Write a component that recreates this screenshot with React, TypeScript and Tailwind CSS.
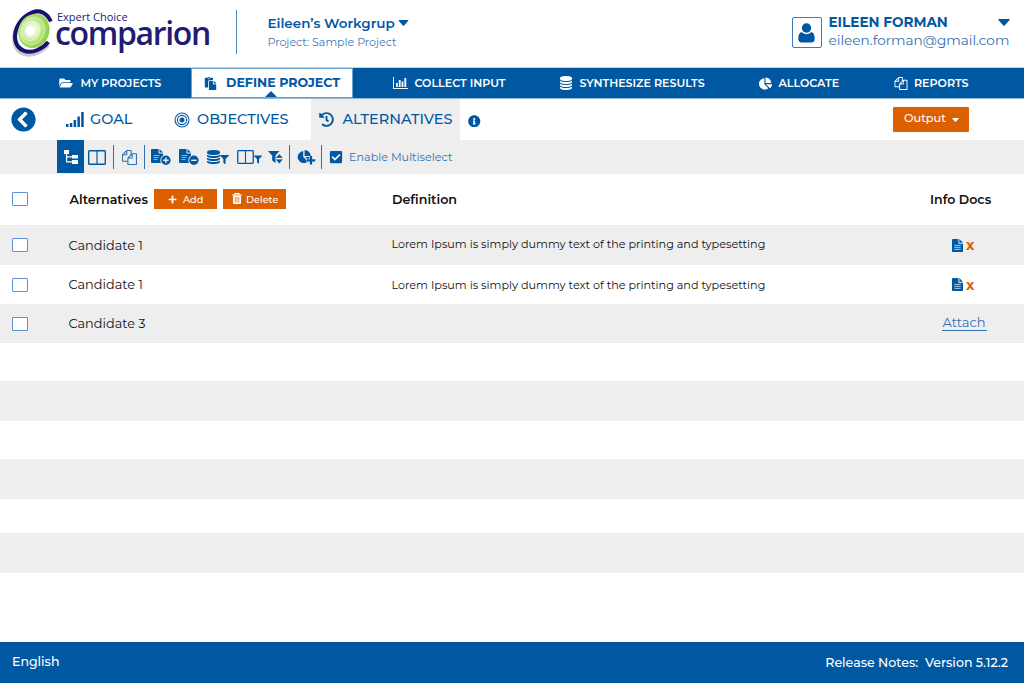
import type { ReactNode } from 'react';
import {
  FaChartPie,
  FaCheckSquare,
  FaChevronCircleLeft,
  FaFilter,
  FaFolderOpen,
  FaHistory,
  FaInfoCircle,
  FaPaste,
  FaPlus,
} from 'react-icons/fa';

type IconProps = { className?: string };

function Logo() {
  return (
    <svg className="h-[50px] w-[44px] shrink-0" viewBox="0 0 44 50">
      <defs>
        <radialGradient id="lime" cx="0.42" cy="0.5" r="0.58">
          <stop offset="0" stopColor="#ffffff" />
          <stop offset="0.3" stopColor="#e9f7d3" />
          <stop offset="0.65" stopColor="#b3e277" />
          <stop offset="1" stopColor="#86cc3c" />
        </radialGradient>
      </defs>
      <path d="M38 13C34 6 27 4 20 7C9 11 1.500 24 3.500 35.500C6 47.500 17 50 26.500 46C31 44 34 41.500 37 38" fill="none" stroke="#c9c9cd" strokeWidth="4" />
      <path d="M39.800 14.500C36 5.500 28.500 2.500 21 5.500C10 10 2.500 22 4.300 33C6.500 44 17 47 26.500 43C31 41 34.500 38.500 37.300 35" fill="none" stroke="#17126e" strokeWidth="4" />
      <ellipse cx="22.800" cy="24" rx="15.300" ry="17.400" transform="rotate(25 22.800 24)" fill="url(#lime)" />
      <g fill="none" stroke="#ffffff" strokeOpacity="0.5" strokeWidth="0.9">
        <ellipse cx="21.500" cy="24" rx="11.500" ry="13.600" transform="rotate(25 21.500 24)" />
        <ellipse cx="20" cy="24" rx="8.300" ry="10" transform="rotate(25 20 24)" />
      </g>
      <ellipse cx="18.500" cy="24" rx="4.300" ry="5" fill="#ffffff" />
    </svg>
  );
}

function Caret({ className }: IconProps) {
  return (
    <svg className={className} viewBox="0 0 12 7">
      <path d="M1 0h10q1.200 0.300 0.400 1.300L6.700 6.500q-0.700 0.600-1.400 0L0.600 1.300Q-0.200 0.300 1 0z" fill="currentColor" />
    </svg>
  );
}

function Person({ className }: IconProps) {
  return (
    <svg className={className} viewBox="0 0 18 21">
      <path d="M3.500 9.500C1.200 10.500 0.300 13.500 0.300 16.500c0 2.600 1.300 4 3.500 4h10.400c2.200 0 3.500-1.400 3.500-4c0-3-0.900-6-3.200-7a7.800 7.800 0 0 1-11 0z" fill="currentColor" />
      <circle cx="9" cy="5.200" r="5" fill="currentColor" />
    </svg>
  );
}

function BarChart({ className }: IconProps) {
  return (
    <svg className={className} viewBox="0 0 15 12">
      <path d="M0 0h1v11h14v1H0zM3 6h1.800v4H3zM5.800 3h1.800v7H5.800zM8.600 4.500h1.800V10H8.600zM11.400 1h1.800v9h-1.800z" fill="currentColor" />
    </svg>
  );
}

function Database({ className }: IconProps) {
  return (
    <svg className={className} viewBox="0 0 1536 1792" preserveAspectRatio="none">
      <path
        d="M768 768q237 0 443-43t325-127v170q0 69-103 128t-280 93.500-385 34.500-385-34.500T103 896 0 768V598q119 84 325 127t443 43zm0 768q237 0 443-43t325-127v170q0 69-103 128t-280 93.500-385 34.500-385-34.500-280-93.500-103-128v-170q119 84 325 127t443 43zm0-384q237 0 443-43t325-127v170q0 69-103 128t-280 93.500-385 34.500-385-34.500-280-93.500T0 1152V982q119 84 325 127t443 43zM768 0q208 0 385 34.500T1433 128t103 128v128q0 69-103 128t-280 93.500T768 640t-385-34.500T103 512 0 384V256q0-69 103-128t280-93.500T768 0z"
        fill="currentColor"
      />
    </svg>
  );
}

function Copies({ className }: IconProps) {
  return (
    <svg className={className} viewBox="0 0 1792 1792">
      <path
        d="M1696 384q40 0 68 28t28 68v1216q0 40-28 68t-68 28H736q-40 0-68-28t-28-68v-288H96q-40 0-68-28t-28-68V640q0-40 20-88t48-76L476 68q28-28 76-48t88-20h416q40 0 68 28t28 68v328q68-40 128-40h416zm-544 213L853 896h299V597zM512 213L213 512h299V213zm196 647l316-316V128H640v416q0 40-28 68t-68 28H128v640h512v-256q0-40 20-88t48-76zm956 804V512h-384v416q0 40-28 68t-68 28H768v640h896z"
        fill="currentColor"
      />
    </svg>
  );
}

function Signal({ className }: IconProps) {
  return (
    <svg className={className} viewBox="0 0 18 15">
      <path d="M0 12h2.500v3H0zM3.800 11h2.500v4H3.800zM7.600 8h2.500v7H7.600zM11.400 4.500h2.500V15h-2.500zM15.200 0h2.500v15h-2.500z" fill="currentColor" />
    </svg>
  );
}

function Target({ className }: IconProps) {
  return (
    <svg className={className} viewBox="0 0 16 16" fill="none" stroke="currentColor">
      <circle cx="8" cy="8" r="7" strokeWidth="1.100" />
      <circle cx="8" cy="8" r="4.600" strokeWidth="1.100" />
      <circle cx="8" cy="8" r="2.300" fill="currentColor" strokeWidth="0.500" />
    </svg>
  );
}

function Tree({ className }: IconProps) {
  return (
    <svg className={className} viewBox="0 0 14 14">
      <path d="M0 0h5v4H3.200v2.200H8V5h6v3.500H8V7.400H3.200v3.900H8V10h6v4H8v-1.400H1.900V4H0z" fill="currentColor" />
    </svg>
  );
}

function Columns({ className }: IconProps) {
  return (
    <svg className={className} viewBox="0 0 18 15" fill="none" stroke="currentColor">
      <rect x="0.700" y="0.700" width="16.600" height="13.600" rx="0.800" strokeWidth="1.400" />
      <path d="M9 1v13" strokeWidth="1.200" />
    </svg>
  );
}

function Doc({ className }: IconProps) {
  return (
    <svg className={className} viewBox="0 0 12 14">
      <path d="M1 0h6v4.200q0 0.800 0.800 0.800H12v8.200q0 0.800-0.800 0.800H0.800Q0 14 0 13.200V0.800Q0 0 1 0zM8 0l4 4H8z" fill="currentColor" />
      <path d="M2.500 6.800h7M2.500 9h7M2.500 11.200h7" stroke="#eeeeee" strokeWidth="0.800" />
    </svg>
  );
}

function DocBadge({ plus }: { plus: boolean }) {
  return (
    <svg className="h-4 w-5 shrink-0" viewBox="0 0 20 16">
      <path d="M1 0h6.500v3.700q0 0.800 0.800 0.800H12V14H1.200Q0 14 0 13V1Q0 0 1 0zM8.500 0l3.500 3.500H8.500z" fill="currentColor" />
      <path d="M2.500 6.500h6M2.500 8.500h5M2.500 10.500h4" stroke="#eeeeee" strokeWidth="0.600" />
      <circle cx="14.500" cy="11.300" r="5.200" fill="#eeeeee" />
      <circle cx="14.900" cy="11.300" r="4.700" fill="currentColor" />
      <path d={plus ? 'M12.200 11.300h5.400M14.900 8.600v5.400' : 'M12.200 11.300h5.400'} stroke="#eeeeee" strokeWidth="1.400" />
    </svg>
  );
}

function FilterSort({ className }: IconProps) {
  return (
    <svg className={className} viewBox="0 0 15 13">
      <path d="M0 0h11.500L7.500 4.500V12L4.200 9.500V4.800z" fill="currentColor" />
      <path d="M7.500 7L11.300 3L15 7zM7.500 8.300h7.500L11.300 12.700z" fill="currentColor" stroke="#eeeeee" strokeWidth="0.300" />
    </svg>
  );
}

function PiePlus({ className }: IconProps) {
  return (
    <svg className={className} viewBox="0 0 20 16">
      <path d="M6.500 1v6.500l5 4.800A6.500 6.500 0 1 1 6.500 1z" fill="currentColor" />
      <path d="M8 0a6.500 6.500 0 0 1 6.500 6.500H8zM8.500 7.500h5.500l-2 3z" fill="currentColor" />
      <path d="M10 11h9.500M14.700 6.300v9.500" stroke="#eeeeee" strokeWidth="3.200" />
      <path d="M10.300 11h9M14.800 6.500v9" stroke="currentColor" strokeWidth="2.400" />
    </svg>
  );
}

function Trash({ className }: IconProps) {
  return (
    <svg className={className} viewBox="0 0 10 11">
      <path d="M3 1.500V0.500h4v1M0 2h10" fill="none" stroke="currentColor" strokeWidth="1.200" />
      <path d="M1 2.600h8V10q0 1-1 1H2q-1 0-1-1z" fill="currentColor" />
      <path d="M3.200 4v5.500M5 4v5.500M6.800 4v5.500" stroke="#dc6000" strokeWidth="0.700" />
    </svg>
  );
}

function NavItem({ left, icon, gap, children }: { left: string; icon: ReactNode; gap: string; children: ReactNode }) {
  return (
    <div className={`flex shrink-0 items-center whitespace-nowrap text-[11.100px] font-semibold text-white ${left} ${gap}`}>
      {icon}
      <span>{children}</span>
    </div>
  );
}

function Checkbox() {
  return <span className="block h-[14px] w-4 rounded-[1px] border border-[#5b90d4] bg-white" />;
}

const LOREM = 'Lorem Ipsum is simply dummy text of the printing and typesetting';

type RowProps = { name: string; height: string; shade: string; attached: boolean; nameShift?: string; textShift?: string };

function Row({ name, height, shade, attached, nameShift = '', textShift = '' }: RowProps) {
  return (
    <div className={`flex items-center ${height} ${shade}`}>
      <div className="w-[68.500px] pl-3">
        <Checkbox />
      </div>
      <div className={`w-[323px] text-[12.850px] font-[450] text-[#111111] ${nameShift}`}>{name}</div>
      <div className={`w-[550px] text-[11.200px] font-[450] text-[#111111] ${textShift}`}>{attached ? LOREM : ''}</div>
      {attached ? (
        <div className="flex items-center gap-[3px] pl-[10.500px] text-[#0058a3]">
          <Doc className="h-[13px] w-[11px]" />
          <span className="text-[14px] leading-4 font-bold text-[#dc6000]">x</span>
        </div>
      ) : (
        <a className="-mt-0.5 border-b border-[#2f70b2] px-px text-[13px] leading-[15px] font-[450] text-[#2f70b2]">Attach</a>
      )}
    </div>
  );
}

export default function App() {
  return (
    <div className="flex h-[683px] w-[1024px] flex-col overflow-hidden bg-white font-['Montserrat','Inter',sans-serif] text-[#0058a3]">
      <header className="flex h-[68px] shrink-0 border-b border-[#bcd3e4]">
        <div className="flex w-[236px] pt-[7px] pl-[11px]">
          <Logo />
          <div className="flex flex-col whitespace-nowrap text-[#211c72] font-['Open_Sans',sans-serif]">
            <span className="mt-[3px] ml-[2px] h-[12px] text-[11px] leading-[14px] font-medium">Expert Choice</span>
            <span className="text-[32px] leading-[22px] font-semibold tracking-[-1.350px]">comparion</span>
          </div>
        </div>
        <div className="mt-[10px] h-11 w-px bg-[#4d8cc3]" />
        <div className="w-[554.500px] pt-[14px] pl-[30.500px]">
          <div className="flex items-center gap-[3px] text-[13.500px] leading-[18px] font-semibold">
            <span>Eileen’s Workgrup</span>
            <Caret className="h-[6px] w-[11px]" />
          </div>
          <div className="mt-px text-[11.050px] leading-[18px] text-[#3e79b8]">Project: Sample Project</div>
        </div>
        <div className="mt-[17px] flex h-[31px] w-[30px] items-center justify-center rounded-[2px] border border-[#3a7dbb]">
          <Person className="h-[20px] w-[17px]" />
        </div>
        <div className="w-[182px] pt-[14px] pl-[7px]">
          <div className="flex items-center justify-between text-[13.600px] leading-[17px] font-bold">
            <span>EILEEN FORMAN</span>
            <Caret className="mr-[-6px] h-[7px] w-3" />
          </div>
          <div className="text-[13.650px] leading-[18px] text-[#2f70b2]">eileen.forman@gmail.com</div>
        </div>
      </header>

      <nav className="flex h-[30px] shrink-0 bg-[#0058a3]">
        <NavItem left="w-[191px] pl-[59px]" gap="gap-[7.500px]" icon={<FaFolderOpen className="h-3 w-[14px]" />}>
          MY PROJECTS
        </NavItem>
        <div className="relative flex w-[162px] items-center gap-[9px] border border-[#6ba3cf] bg-white pl-[12px] text-[12.600px] font-bold whitespace-nowrap">
          <FaPaste className="h-[13px] w-[13px]" />
          <span>DEFINE PROJECT</span>
          <svg className="absolute bottom-0 left-[73px] h-[6px] w-3" viewBox="0 0 12 6">
            <path d="M6 0L12 6H0z" fill="#0058a3" />
          </svg>
        </div>
        <NavItem left="w-[207px] pl-[40px]" gap="gap-[6.500px]" icon={<BarChart className="h-[12px] w-[15px]" />}>
          COLLECT INPUT
        </NavItem>
        <NavItem left="w-[199px]" gap="gap-[7.500px]" icon={<Database className="h-[14px] w-3" />}>
          SYNTHESIZE RESULTS
        </NavItem>
        <NavItem left="w-[134.500px]" gap="gap-[6.500px]" icon={<FaChartPie className="h-[13px] w-[13px]" />}>
          ALLOCATE
        </NavItem>
        <NavItem left="" gap="gap-[6.500px]" icon={<Copies className="h-[13px] w-[14px]" />}>
          REPORTS
        </NavItem>
      </nav>

      <div className="flex h-[42px] shrink-0 border-t border-[#8fb8d8] text-[14.450px] font-medium whitespace-nowrap">
        <div className="flex w-[66px] items-center pl-[11px]">
          <FaChevronCircleLeft className="h-[25px] w-[25px]" />
        </div>
        <div className="flex w-[108px] items-center gap-[6px]">
          <Signal className="h-[15px] w-[18px]" />
          <span>GOAL</span>
        </div>
        <div className="flex w-[137px] items-center gap-[7px]">
          <Target className="h-4 w-4" />
          <span>OBJECTIVES</span>
        </div>
        <div className="flex w-[149px] items-center gap-[8.500px] bg-[#eeeeee] pl-[8px]">
          <FaHistory className="h-[15px] w-[15px]" />
          <span>ALTERNATIVES</span>
        </div>
        <div className="flex w-[433px] items-center pt-[3px] pl-[8px]">
          <FaInfoCircle className="h-[12.500px] w-[12.500px]" />
        </div>
        <button className="mt-2 flex h-[25px] w-[76px] items-center gap-1.5 rounded-[1px] bg-[#dc6000] pb-[2px] pl-[11px] text-[11.300px] font-medium text-white">
          <span>Output</span>
          <Caret className="mt-[2px] h-1 w-[7px]" />
        </button>
      </div>

      <div className="flex h-[34px] shrink-0 items-center bg-[#eeeeee] pl-[57px]">
        <div className="flex h-[33px] w-[27px] items-center justify-center self-start bg-[#0058a3] text-white">
          <Tree className="h-[14px] w-[14px]" />
        </div>
        <Columns className="ml-1 h-[15px] w-[18px]" />
        <div className="ml-[7px] h-6 w-px bg-[#2f70b2]" />
        <Copies className="ml-[8px] h-[15px] w-[15px] text-[#2f70b2]" />
        <div className="ml-[7px] h-6 w-px bg-[#2f70b2]" />
        <div className="ml-[6px] flex items-center gap-2">
          <DocBadge plus />
          <DocBadge plus={false} />
        </div>
        <Database className="ml-2 h-[14px] w-[13px]" />
        <FaFilter className="mt-[5px] h-[9px] w-[9px]" />
        <Columns className="ml-[8px] h-[14px] w-[17px]" />
        <FaFilter className="mt-[5px] h-[9px] w-[8px]" />
        <FilterSort className="ml-[6px] h-[13px] w-[15px]" />
        <div className="ml-[6px] h-6 w-px bg-[#2f70b2]" />
        <PiePlus className="ml-[7px] h-[15px] w-[19px]" />
        <div className="ml-[5px] h-6 w-px bg-[#2f70b2]" />
        <FaCheckSquare className="ml-[7px] h-[14px] w-[14px]" />
        <span className="ml-[6px] text-[11.200px] text-[#2f70b2]">Enable Multiselect</span>
      </div>

      <main className="flex grow flex-col whitespace-nowrap">
        <div className="flex h-[50px] items-center text-[12.700px] font-semibold text-[#111111]">
          <div className="w-[69.500px] pl-3">
            <Checkbox />
          </div>
          <div className="flex w-[322.500px] items-center">
            <span className="w-[84.500px] pt-px">Alternatives</span>
            <button className="flex h-5 w-[63px] items-center gap-[6px] bg-[#dc6000] pt-[2px] pl-[14px] text-[9.700px] font-medium text-white">
              <FaPlus className="mb-px h-[9px] w-[9px]" />
              Add
            </button>
            <button className="ml-[6px] flex h-5 w-[63px] items-center gap-[4px] bg-[#dc6000] pt-[2px] pl-[9px] text-[9.700px] font-medium text-white">
              <Trash className="mb-[2px] h-[11px] w-[10px]" />
              Delete
            </button>
          </div>
          <div className="w-[538px] pt-px">Definition</div>
          <div className="pt-[3px] text-[12.600px]">Info Docs</div>
        </div>
        <Row name="Candidate 1" height="mt-px h-[40px]" shade="bg-[#eeeeee]" nameShift="pt-[2px]" textShift="pb-px" attached />
        <Row name="Candidate 1" height="h-[39px]" shade="bg-white" textShift="pt-px" attached />
        <Row name="Candidate 3" height="h-[39px]" shade="bg-[#eeeeee]" nameShift="pt-px" attached={false} />
        <div className="mt-[38px] h-10 bg-[#eeeeee]" />
        <div className="mt-[38px] h-10 bg-[#eeeeee]" />
        <div className="mt-[34px] h-10 bg-[#eeeeee]" />
      </main>

      <footer className="flex h-[41px] shrink-0 items-center justify-between bg-[#0058a3] pr-[16px] pl-3 text-[12.550px] font-medium text-white">
        <span>English</span>
        <span className="pt-[2px] text-[12.600px] whitespace-pre">Release Notes:  Version 5.12.2</span>
      </footer>
    </div>
  );
}
